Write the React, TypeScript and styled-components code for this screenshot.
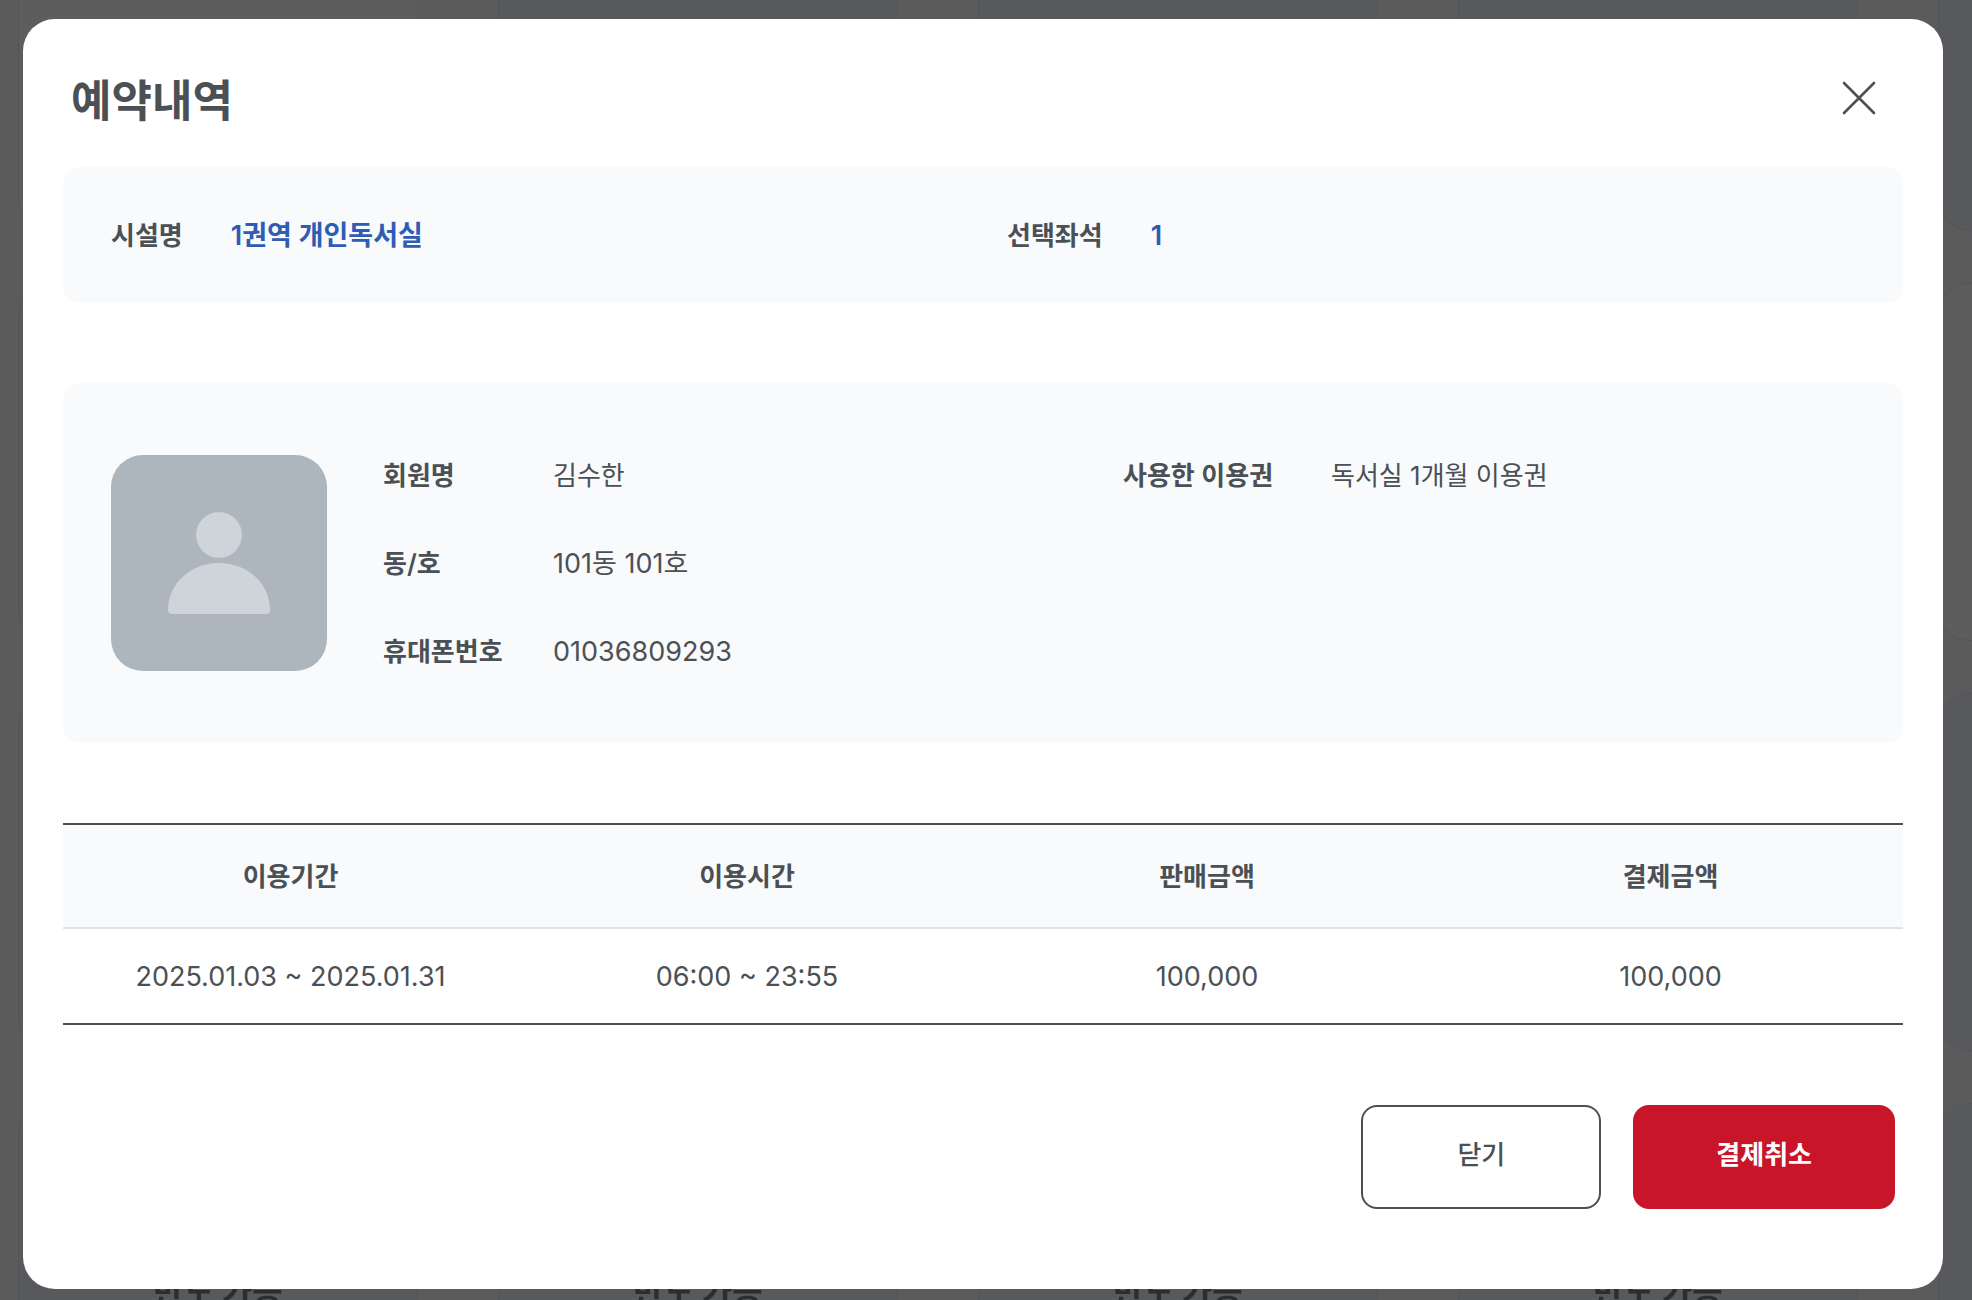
import React from "react";
import styled, { createGlobalStyle } from "styled-components";

const GlobalStyle = createGlobalStyle`
  *, *::before, *::after { box-sizing: border-box; }
  html, body { margin: 0; height: 100%; overflow: hidden; }
  body {
    background: #5b5b5b;
    color: #4b5055;
    font-family: Inter, "Noto Sans CJK KR", sans-serif;
    font-size: 26px;
    line-height: 40px;
  }
  h2, dl, dd { margin: 0; }
`;

const Backdrop = styled.div`
  position: fixed;
  inset: -127px 0 0 18px;
  display: grid;
  grid-template-columns: repeat(5, 400px);
  grid-auto-rows: 358px;
  gap: 52px 80px;
  overflow: hidden;
`;

const SeatCard = styled.div<{ $empty: boolean }>`
  display: grid;
  place-items: center;
  padding-top: 20px;
  border: 1px solid #545556;
  border-radius: 32px;
  background: ${(p) => (p.$empty ? "#5d5d5d" : "#58595d")};
  color: #2b2e30;
  font-size: 33px;
  font-weight: 700;
`;

const Layer = styled.div`
  position: relative;
  min-height: 100vh;
  padding: 19px 29px 11px 23px;
`;

const Dialog = styled.section`
  padding: 0 40px 80px;
  border-radius: 32px;
  background: #fff;
`;

const Header = styled.header`
  height: 148px;
  padding: 10px 8px 0;
  display: flex;
  align-items: center;
  justify-content: space-between;
`;

const Title = styled.h2`
  padding-top: 6px;
  font-size: 44px;
  line-height: 64px;
  font-weight: 700;
`;

const IconButton = styled.button`
  width: 72px;
  height: 72px;
  padding: 0;
  border: 0;
  background: none;
  color: inherit;
  display: grid;
  place-items: center;
  cursor: pointer;
`;

const Panel = styled.div`
  border-radius: 16px;
  background: #f8fafc;
`;

const Summary = styled(Panel)`
  padding: 49px 48px 47px;
`;

const SummaryList = styled.dl`
  display: grid;
  grid-template-columns: 1fr 1fr;
  gap: 48px;
`;

const SummaryItem = styled.div`
  display: flex;
  gap: 48px;
`;

const Term = styled.dt`
  font-weight: 600;
`;

const Accent = styled.dd`
  color: #2f5cb4;
  font-size: 27px;
  font-weight: 600;
`;

const Value = styled.dd<{ $numeric?: boolean }>`
  font-size: ${(p) => (p.$numeric ? 27 : 26)}px;
`;

const Member = styled(Panel)`
  margin-top: 80px;
  padding: 72px 48px 71px;
  display: flex;
  gap: 56px;
`;

const Avatar = styled.div`
  flex: none;
  width: 216px;
  height: 216px;
  border-radius: 32px;
  overflow: hidden;
  background: #adb5bd;
`;

const MemberInfo = styled.div`
  flex: 1;
  padding-top: 1px;
  display: grid;
  grid-template-columns: 1fr 1fr;
  gap: 8px;
`;

const Fields = styled.dl<{ $label: number }>`
  display: grid;
  grid-template-columns: ${(p) => p.$label}px 1fr;
  grid-auto-rows: 40px;
  row-gap: 48px;
`;

const Table = styled.table`
  width: 100%;
  margin-top: 80px;
  table-layout: fixed;
  border-collapse: separate;
  border-spacing: 0;
  border-top: 2px solid #4b4d50;
  border-bottom: 2px solid #4b4d50;
  text-align: center;

  th {
    height: 104px;
    padding: 2px 0 0;
    border-bottom: 2px solid #dee2e6;
    background: #f8fafc;
    font-weight: 600;
  }
  td {
    height: 94px;
    padding: 2px 0 0;
    font-size: 27px;
  }
`;

const Actions = styled.footer`
  margin-top: 80px;
  padding: 0 8px;
  display: flex;
  justify-content: flex-end;
  gap: 32px;
`;

const Button = styled.button<{ $primary?: boolean }>`
  min-width: 240px;
  height: 104px;
  padding: 0 81px 5px;
  border: 2px solid ${(p) => (p.$primary ? "#c8152a" : "#4b5055")};
  border-radius: 16px;
  background: ${(p) => (p.$primary ? "#c8152a" : "#fff")};
  color: ${(p) => (p.$primary ? "#fff" : "#4b5055")};
  font: inherit;
  font-weight: ${(p) => (p.$primary ? 600 : 500)};
  cursor: pointer;
`;

const columns = [
  { title: "이용기간", value: "2025.01.03 ~ 2025.01.31", width: 455 },
  { title: "이용시간", value: "06:00 ~ 23:55", width: 458 },
  { title: "판매금액", value: "100,000", width: 462 },
  { title: "결제금액", value: "100,000", width: 465 },
];

const member = [
  { label: "회원명", value: "김수한" },
  { label: "동/호", value: "101동 101호", numeric: true },
  { label: "휴대폰번호", value: "01036809293", numeric: true },
];

const SEAT_COLUMNS = 5;
const seats = Array.from({ length: 4 * SEAT_COLUMNS }, (_, i) => ({
  id: i,
  empty: i === 0 || i === 9,
  status: i >= 15 && i < 19 ? "반도 가능" : "",
}));

export default function App() {
  return (
    <>
      <GlobalStyle />
      <Backdrop aria-hidden="true">
        {seats.map((s) => (
          <SeatCard key={s.id} $empty={s.empty}>{s.status}</SeatCard>
        ))}
      </Backdrop>
      <Layer>
        <Dialog role="dialog" aria-modal="true" aria-labelledby="dialog-title">
          <Header>
            <Title id="dialog-title">예약내역</Title>
            <IconButton type="button" aria-label="닫기">
              <svg width="36" height="36" viewBox="0 0 36 36" fill="none" stroke="currentColor" strokeWidth="2.6" strokeLinecap="round">
                <path d="M3 3 33 33M33 3 3 33" />
              </svg>
            </IconButton>
          </Header>

          <Summary>
            <SummaryList>
              <SummaryItem>
                <Term>시설명</Term>
                <Accent>1권역 개인독서실</Accent>
              </SummaryItem>
              <SummaryItem>
                <Term>선택좌석</Term>
                <Accent>1</Accent>
              </SummaryItem>
            </SummaryList>
          </Summary>

          <Member>
            <Avatar>
              <svg width="216" height="216" viewBox="0 0 216 216" fill="#ced4da" aria-hidden="true">
                <circle cx="108" cy="80" r="23" />
                <path d="M57 155C57 128 80 108 108 108s51 20 51 47q0 4-4 4H61q-4 0-4-4Z" />
              </svg>
            </Avatar>
            <MemberInfo>
              <Fields $label={170}>
                {member.map((m) => (
                  <React.Fragment key={m.label}>
                    <Term>{m.label}</Term>
                    <Value $numeric={m.numeric}>{m.value}</Value>
                  </React.Fragment>
                ))}
              </Fields>
              <Fields $label={208}>
                <Term>사용한 이용권</Term>
                <Value>독서실 1개월 이용권</Value>
              </Fields>
            </MemberInfo>
          </Member>

          <Table>
            <colgroup>
              {columns.map((c) => (
                <col key={c.title} style={{ width: c.width }} />
              ))}
            </colgroup>
            <thead>
              <tr>
                {columns.map((c) => (
                  <th key={c.title} scope="col">{c.title}</th>
                ))}
              </tr>
            </thead>
            <tbody>
              <tr>
                {columns.map((c) => (
                  <td key={c.title}>{c.value}</td>
                ))}
              </tr>
            </tbody>
          </Table>

          <Actions>
            <Button type="button">닫기</Button>
            <Button type="button" $primary>결제취소</Button>
          </Actions>
        </Dialog>
      </Layer>
    </>
  );
}
